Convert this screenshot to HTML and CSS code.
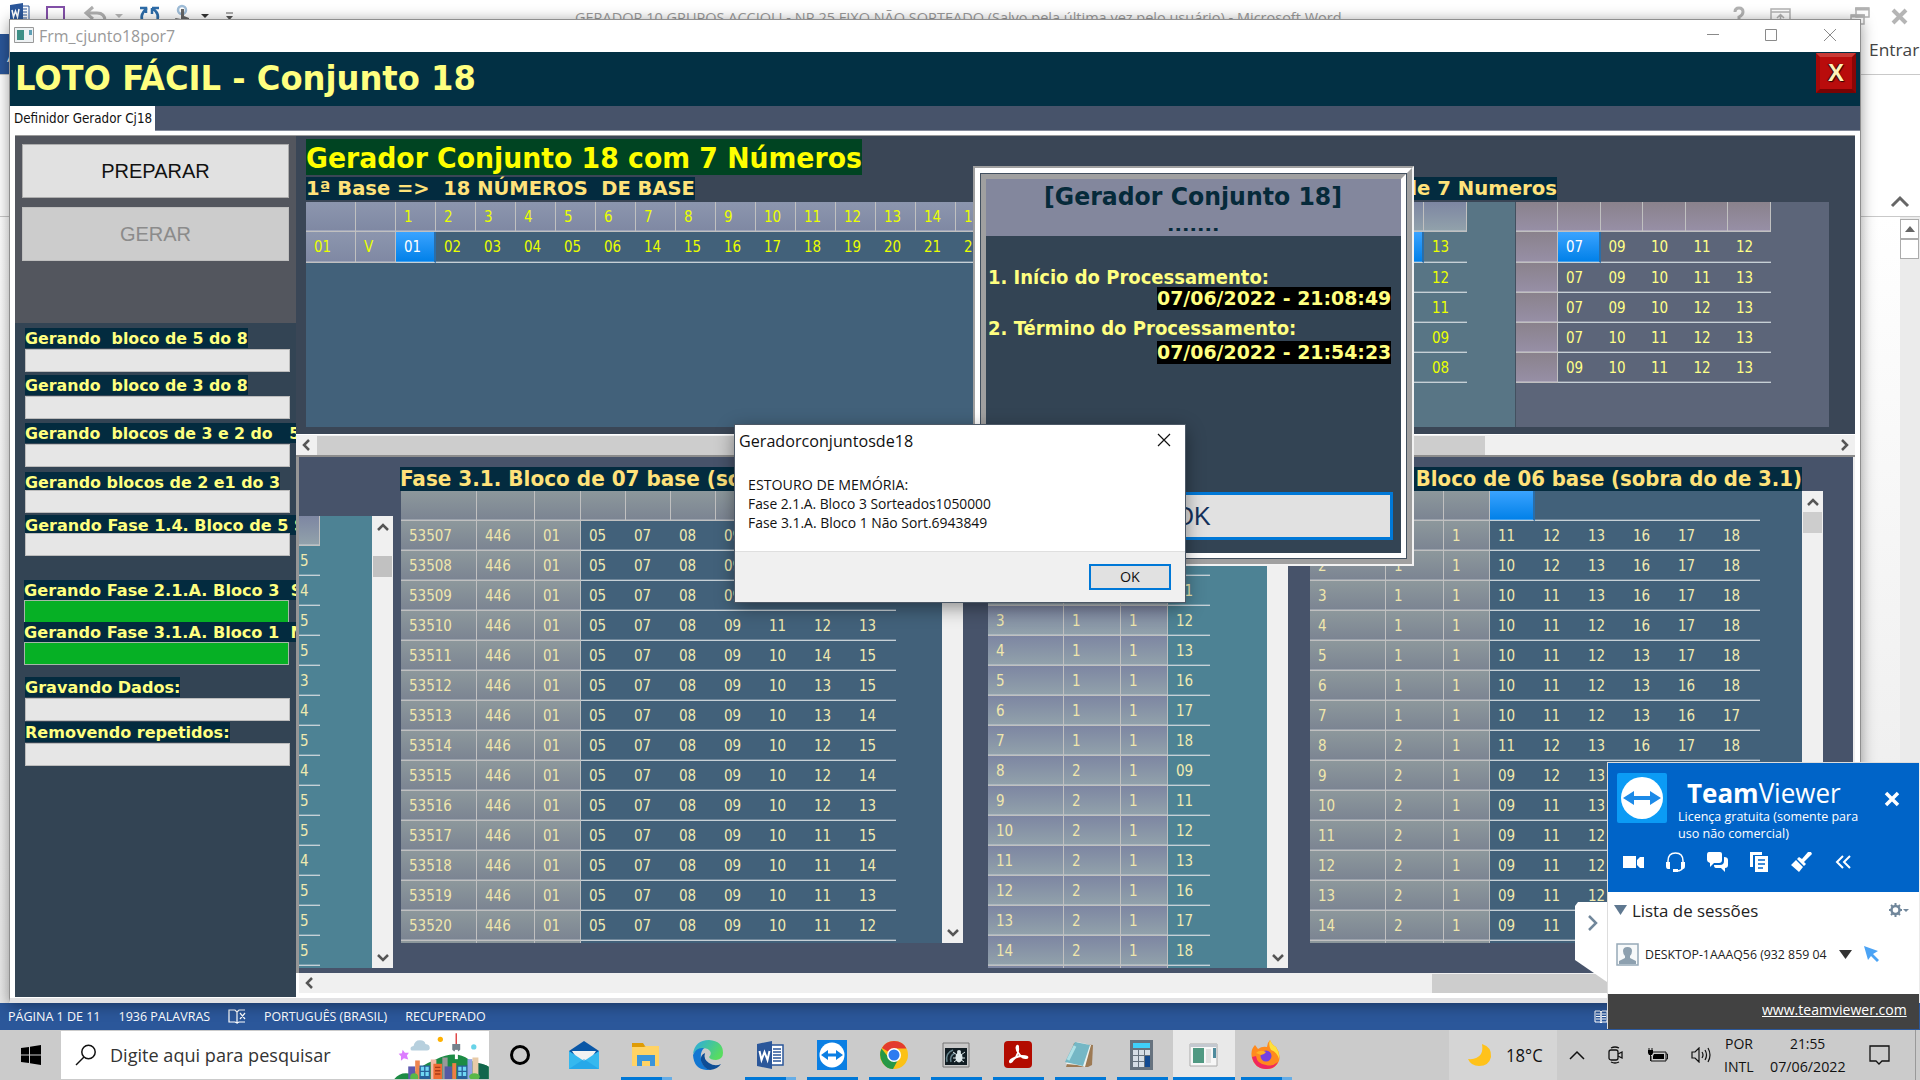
FILE: index.html
```html
<!DOCTYPE html>
<html lang="pt-BR">
<head>
<meta charset="utf-8">
<title>LOTO FÁCIL - Conjunto 18</title>
<link rel="stylesheet" href="styles.css">
</head>
<body>
<div class="desktop">

<section class="word">
  <header class="word-title">
    <svg class="word-tools" width="240" height="26" viewBox="0 0 240 26">
      <path d="M17 6h12v18H17z" fill="#fff" stroke="#2b579a"/><path d="M19 9h8M19 12h8M19 15h8M19 18h8" stroke="#2b579a"/>
      <path d="M10 5l13-2v22l-13-2z" fill="#2b579a"/><path d="M12 10l1.5 7 2-6 2 6L19 9" fill="none" stroke="#fff" stroke-width="1.5"/>
      <path d="M47 7h17v18H47z" fill="#fff" stroke="#8350a8" stroke-width="2"/><path d="M51 20h9v5h-9z" fill="#8350a8"/>
      <path d="M93 7l-7 6 7 6M87 13h10q8 0 8 8" fill="none" stroke="#b0b0b0" stroke-width="3"/>
      <path d="M115 14h8l-4 4z" fill="#b8b8b8"/>
      <path d="M147 8q-9 8-3 16M152 8h7M152 8v6M153 9q8 5 3 14M140 8h6v5" fill="none" stroke="#2d6ca8" stroke-width="2.500"/>
      <circle cx="182" cy="10" r="4" fill="none" stroke="#9fbdd8" stroke-width="2.5"/><path d="M181 9h3v7l5 2v6h-11l-3-6 6 1z" fill="#666"/>
      <path d="M201 14h8l-4 4z" fill="#333"/><path d="M226 13h7" stroke="#555"/><path d="M226 16h7l-3.500 4z" fill="#555"/>
    </svg>
    <span class="word-name"><span class="fit" data-w="767">GERADOR 10 GRUPOS ACCIOLI - NR 25 FIXO NÃO SORTEADO (Salvo pela última vez pelo usuário) - Microsoft Word</span></span>
    <svg class="word-sys" width="190" height="32" viewBox="0 0 190 32">
      <path d="M4 12q0-4 4-4t4 4q0 3-4 5v3" fill="none" stroke="#b3b3b3" stroke-width="3"/>
      <path d="M40 9h19v16H40zM40 12h19M49.500 25V15M46 18l3.500-3.500L53 18" fill="none" stroke="#b3b3b3" stroke-width="1.500"/>
      <path d="M125 8h13v9h-13zM120 15h13v9h-13z" fill="#fff" stroke="#b3b3b3" stroke-width="1.500"/><path d="M124 9h14M120 16h14" stroke="#b3b3b3" stroke-width="3"/>
      <path d="M162 10l13 13M175 10l-13 13" stroke="#b5b5b5" stroke-width="4"/>
    </svg>
  </header>
  <div class="word-tabs"><div class="word-file">A</div><div class="word-login"><span class="fit" data-w="50">Entrar</span></div></div>
  <div class="word-ribbon"><svg width="20" height="14" viewBox="0 0 20 14"><path d="M2 12l8-8 8 8" fill="none" stroke="#666" stroke-width="3"/></svg></div>
  <div class="word-page"><div class="word-scroll"><div class="word-up"><svg width="10" height="6"><path d="M0 6l5-6 5 6z" fill="#666"/></svg></div><div class="word-thumb"></div></div></div>
  <footer class="word-status">
    <span class="fit" data-w="93">PÁGINA 1 DE 11</span><span class="fit" data-w="92">1936 PALAVRAS</span>
    <svg width="18" height="16" viewBox="0 0 18 16"><path d="M1 1h6l2 2v11l-2-1H1zM9 3l2-2h6M9 14l2-1h6M12 4l5 6M17 4l-5 6" fill="none" stroke="#fff" stroke-width="1.200"/></svg>
    <span class="fit" data-w="123">PORTUGUÊS (BRASIL)</span><span class="fit" data-w="81">RECUPERADO</span>
    <svg class="book" width="14" height="14" viewBox="0 0 14 14"><path d="M1 1h5l1 1v11l-1-1H1zM13 1H8L7 2v11l1-1h5zM2 4h4M2 6.500h4M2 9h4M8 4h4M8 6.500h4M8 9h4" fill="none" stroke="#fff"/></svg>
  </footer>
</section>

<main class="form">
  <header class="form-bar">
    <svg width="20" height="16" viewBox="0 0 20 16"><path d="M.5.500h19v15H.5z" fill="#eef2f4" stroke="#999"/><path d="M3 3h7v10H3z" fill="#3d8f86"/><path d="M15 3h3v5h-3z" fill="#5d9fb5"/></svg>
    <span class="fit" data-w="136">Frm_cjunto18por7</span>
    <svg class="form-sys" width="132" height="16" viewBox="0 0 132 16"><path d="M1 7.500h12M59.500 2.500h11v11h-11zM118 2l12 12M130 2l-12 12" fill="none" stroke="#8a8a8a"/></svg>
  </header>
  <div class="form-head"><h1><span class="fit" data-w="461">LOTO FÁCIL - Conjunto 18</span></h1><button class="red-x"><span>X</span></button></div>
  <div class="tabs"><div class="tab"><span class="fit" data-w="138">Definidor Gerador Cj18</span></div></div>
  <div class="page">
    <aside class="side">
      <div class="side-buttons"><button class="big">PREPARAR</button><button class="big off">GERAR</button></div>
      <div class="meters">
        <div class="meter"><label><span class="fit" data-w="223">Gerando  bloco de 5 do 8</span></label><i></i></div>
        <div class="meter"><label><span class="fit" data-w="223">Gerando  bloco de 3 do 8</span></label><i></i></div>
        <div class="meter"><label><span class="fit" data-w="275">Gerando  blocos de 3 e 2 do   5</span></label><i></i></div>
        <div class="meter tight"><label><span class="fit" data-w="255">Gerando blocos de 2 e1 do 3</span></label><i></i></div>
        <div class="meter tight"><label><span class="fit" data-w="280">Gerando Fase 1.4. Bloco de 5 S</span></label><i></i></div>
        <div class="meter full"><label><span class="fit" data-w="278">Gerando Fase 2.1.A. Bloco 3  S</span></label><i></i></div>
        <div class="meter full"><label><span class="fit" data-w="280">Gerando Fase 3.1.A. Bloco 1  N</span></label><i></i></div>
        <div class="meter"><label><span class="fit" data-w="155">Gravando Dados:</span></label><i></i></div>
        <div class="meter"><label><span class="fit" data-w="205">Removendo repetidos:</span></label><i></i></div>
      </div>
    </aside>
    <div class="work">
      <section class="upper">
        <h2><span class="fit" data-w="556">Gerador Conjunto 18 com 7 Números</span></h2>
        <div class="captions"><span class="fit cap" data-w="389">1ª Base =&gt;  18 NÚMEROS  DE BASE</span><span class="fit cap" data-w="154">de 7 Numeros</span></div>
        <div class="upper-grids">
          <div class="pane pane-a"><div class="grid" id="base"></div></div>
          <div class="pane pane-b"><div class="grid" id="left7"></div></div>
          <div class="pane pane-c"><div class="grid" id="right7"></div></div>
        </div>
      </section>
      <div class="hbar one"><svg width="9" height="12" viewBox="0 0 9 12"><path d="M7 1L2 6l5 5" /></svg><div class="thumb"></div><svg width="9" height="12" viewBox="0 0 9 12"><path d="M2 1l5 5-5 5"/></svg></div>
      <section class="lower">
        <div class="box box-d"><div class="pane teal"><div class="grid" id="tail"></div></div><div class="vbar"><svg width="12" height="9" viewBox="0 0 12 9"><path d="M1 7l5-5 5 5"/></svg><div class="thumb"></div><svg width="12" height="9" viewBox="0 0 12 9"><path d="M1 2l5 5 5-5"/></svg></div></div>
        <div class="col-e"><span class="fit cap tall" data-w="356">Fase 3.1. Bloco de 07 base (sob</span>
          <div class="box box-e"><div class="pane"><div class="grid" id="base7"></div></div><div class="vbar"><svg width="12" height="9" viewBox="0 0 12 9"><path d="M1 7l5-5 5 5"/></svg><svg width="12" height="9" viewBox="0 0 12 9"><path d="M1 2l5 5 5-5"/></svg></div></div></div>
        <div class="box box-f"><div class="pane teal"><div class="grid" id="single"></div></div><div class="vbar"><svg width="12" height="9" viewBox="0 0 12 9"><path d="M1 7l5-5 5 5"/></svg><svg width="12" height="9" viewBox="0 0 12 9"><path d="M1 2l5 5 5-5"/></svg></div></div>
        <div class="col-g"><span class="fit cap tall" data-w="393"> Bloco de 06 base (sobra do de 3.1)</span>
          <div class="box box-g"><div class="pane"><div class="grid" id="base6"></div></div><div class="vbar"><svg width="12" height="9" viewBox="0 0 12 9"><path d="M1 7l5-5 5 5"/></svg><div class="thumb"></div><svg width="12" height="9" viewBox="0 0 12 9"><path d="M1 2l5 5 5-5"/></svg></div></div></div>
      </section>
      <div class="hbar two"><svg width="9" height="12" viewBox="0 0 9 12"><path d="M7 1L2 6l5 5"/></svg><div class="thumb"></div></div>
    </div>
  </div>
</main>

<section class="result"><div class="r2"><div class="r3"><div class="r4">
  <header><h3><span class="fit" data-w="298">[Gerador Conjunto 18]</span></h3><p><span class="fit" data-w="52">.......</span></p></header>
  <div class="r-line first"><span class="fit" data-w="281">1. Início do Processamento:</span></div>
  <div class="r-date"><span class="fit" data-w="234">07/06/2022 - 21:08:49</span></div>
  <div class="r-line"><span class="fit" data-w="308">2. Término do Processamento:</span></div>
  <div class="r-date late"><span class="fit" data-w="234">07/06/2022 - 21:54:23</span></div>
  <button class="r-ok">OK</button>
</div></div></div></section>

<section class="msg">
  <header><span class="fit" data-w="174">Geradorconjuntosde18</span><svg width="14" height="14" viewBox="0 0 14 14"><path d="M1 1l12 12M13 1L1 13" stroke="#111" stroke-width="1.200"/></svg></header>
  <div class="msg-text"><span class="fit" data-w="160">ESTOURO DE MEMÓRIA:</span><span class="fit" data-w="243">Fase 2.1.A. Bloco 3 Sorteados1050000</span><span class="fit" data-w="239">Fase 3.1.A. Bloco 1 Não Sort.6943849</span></div>
  <footer><button><span class="fit" data-w="20">OK</span></button></footer>
</section>

<section class="tv">
  <div class="tv-handle"><svg width="32" height="80" viewBox="0 0 32 80"><path d="M3 0h29v80L0 58V4z" fill="#fff"/><path d="M14 14l7 7-7 7" fill="none" stroke="#71879b" stroke-width="2.500"/></svg></div>
  <header>
    <div class="tv-top">
      <svg width="50" height="50" viewBox="0 0 50 50"><rect width="50" height="50" rx="2" fill="#0b9bf5"/><circle cx="25" cy="25" r="21" fill="#fff"/><path d="M6 25l11-7v5h16v-5l11 7-11 7v-5H17v5z" fill="#1c8ae8"/></svg>
      <div class="tv-names"><b><span class="fit" data-w="154"><strong>Team</strong>Viewer</span></b><span class="fit" data-w="180">Licença gratuita (somente para</span><span class="fit" data-w="111">uso não comercial)</span></div>
      <svg class="tv-x" width="16" height="16" viewBox="0 0 16 16"><path d="M2 2l12 12M14 2L2 14" stroke="#fff" stroke-width="3.500"/></svg>
    </div>
    <div class="tv-icons">
      <svg viewBox="0 0 21 20"><path d="M0 4h13v12H0zM14 8l3-3h4v11h-4l-3-3z"/></svg>
      <svg viewBox="0 0 21 20"><path d="M3 12V9q0-8 7.500-8T18 9v3M18 14q0 5-7 5" fill="none" stroke="#fff" stroke-width="1.500"/><path d="M1 10h4v7H3q-2 0-2-3zM16 10h4v4q0 3-2 3h-2zM8 17h5v3H8z"/></svg>
      <svg viewBox="0 0 21 20"><path d="M2 0h11q2 0 2 2v6q0 3-3 3H7l-4 4v-4Q0 10 0 8V3q0-3 2-3z"/><path d="M17 5q4 0 4 3v5q0 3-3 3v4l-4-4H9q-2 0-2-3h6q4 0 4-4z"/></svg>
      <svg viewBox="0 0 21 20"><path d="M1 0h12v3H4v12H1zM6 4h13v16H6z"/><path d="M9 8h7M9 12h7M9 16h5" stroke="#0064c8" stroke-width="1.500"/></svg>
      <svg viewBox="0 0 21 20"><path d="M20 0l1 2-8 8 2 2-2 2-7-7 2-2 3 2 6-7zM5 8l7 7-4 5-8-7z"/></svg>
      <svg viewBox="0 0 21 20"><path d="M10 4l-6 6 6 6M17 4l-6 6 6 6" fill="none" stroke="#fff" stroke-width="2"/></svg>
    </div>
  </header>
  <div class="tv-body">
    <div class="tv-list"><svg width="13" height="10"><path d="M0 0h13L6.500 10z" fill="#5f7890"/></svg><span class="fit" data-w="126">Lista de sessões</span><svg class="gear" width="20" height="14" viewBox="0 0 20 14"><circle cx="6.500" cy="7" r="4" fill="none" stroke="#71879b" stroke-width="2.500"/><path d="M6.500 0v3M6.500 11v3M0 7h3M10 7h3M2 2l2 2M9 10l2 2M11 2L9 4M4 10l-2 2" stroke="#71879b" stroke-width="2"/><path d="M14 6h6l-3 3z" fill="#71879b"/></svg></div>
    <div class="tv-row"><svg width="23" height="23" viewBox="0 0 23 23"><path d="M1 1h21v21H1z" fill="#f7f9fa" stroke="#97a9b8" stroke-width="1.500"/><path d="M3 21v-3l6-3v-2q-2-2-2-5 0-4 4.500-4T16 8q0 3-2 5v2l6 3v3z" fill="#8da0af"/></svg><span class="fit" data-w="182">DESKTOP-1AAAQ56 (932 859 04</span><svg width="13" height="9"><path d="M0 0h13L6.500 9z" fill="#333"/></svg><svg width="16" height="16" viewBox="0 0 16 16"><path d="M0 0l14 5-5 3 6 6-2 2-6-6-3 4z" fill="#4ba3f5"/></svg></div>
  </div>
  <footer><span class="fit" data-w="145">www.teamviewer.com</span></footer>
</section>

<nav class="taskbar">
  <div class="start"><svg width="20" height="20" viewBox="0 0 20 20"><path d="M0 3l8-1v7.500H0zM9 1.800L20 0v9.500H9zM0 10.500h8V18l-8-1zM9 10.500h11V20L9 18.200z"/></svg></div>
  <div class="search">
    <svg width="22" height="22" viewBox="0 0 22 22"><circle cx="13.500" cy="8" r="6.700" fill="none" stroke="#111" stroke-width="1.500"/><path d="M9 13l-8 8" stroke="#111" stroke-width="1.500"/></svg>
    <span class="fit" data-w="221">Digite aqui para pesquisar</span>
    <svg class="city" width="95" height="48" viewBox="45 35 285 145">
      <path d="M95 93q-4-12 8-13 4-18 20-17 14 0 16 11 14 1 13 14-1 6-8 6H100z" fill="#b7d0de"/><circle cx="184" cy="60" r="8" fill="#ffb100"/><circle cx="285" cy="83" r="8" fill="#68d3e8"/>
      <path d="M70 92l7 9 12 0-6 8 4 12-13-4-9 8 0-14-7-7 10-2z" fill="#dc7cff"/>
      <path d="M45 180q20-25 55-14 20-25 70-45 60-30 100 0l30 14q20 0 30 8v37z" fill="#1c8b45"/><path d="M260 140q30-20 70 3v37h-60z" fill="#12664d"/>
      <path d="M230 42h4v35h-4z" fill="#d33"/><path d="M220 74h24v18l-5 4h-14l-5-4z" fill="#76818c"/><path d="M228 92h9v28h-9z" fill="#fff"/>
      <path d="M190 115h16v65h-16z" fill="#999"/><path d="M87 142h21v38H87z" fill="#5e5ab0"/><path d="M108 124h14v56h-14z" fill="#ee8650"/><path d="M155 121h17v59h-17z" fill="#f2b8a4"/><path d="M121 139h32v41h-32zM234 139h32v41h-32z" fill="#28609a"/><path d="M125 143h10v12h-10zM139 143h10v12h-10zM125 159h10v12h-10zM139 159h10v12h-10zM238 143h10v12h-10zM252 143h10v12h-10zM238 159h10v12h-10zM252 159h10v12h-10z" fill="#70d7f4"/><path d="M163 134h26v46h-26z" fill="#ed6c32"/><path d="M197 142h23v38h-23z" fill="#555aa3"/><path d="M220 132h12v48h-12z" fill="#ef7e45"/><path d="M266 120h15v60h-15z" fill="#91a3e5"/><path d="M281 115h18v65h-18z" fill="#e8cba8"/><path d="M168 145h16M168 155h16M168 165h16" stroke="#a83a16" stroke-width="4"/><circle cx="105" cy="175" r="12" fill="#59b848"/><ellipse cx="287" cy="173" rx="16" ry="10" fill="#59b848"/>
    </svg>
  </div>
  <div class="apps">
    <div class="app"><svg viewBox="0 0 30 30"><circle cx="13" cy="15" r="8.500" fill="none" stroke="#000" stroke-width="3"/></svg></div>
    <div class="app"><svg viewBox="0 0 30 30"><path d="M0 11L15 1l15 10v8H0z" fill="#0a57a6"/><path d="M3 11h24l-8 12h-8z" fill="#f2f2f2"/><path d="M0 11l15 10 15-10v18H0z" fill="#35b8ef"/><path d="M0 29l15-10 15 10z" fill="#1d9ce4" opacity=".6"/></svg></div>
    <div class="app run multi"><svg viewBox="0 0 30 30"><path d="M1 3h11l2 3h14v5H1z" fill="#df9b05"/><path d="M1 7h12l2-1h13v20H1z" fill="#ffd365"/><path d="M6 15h18v11h-5v-5h-8v5H6z" fill="#3a95db"/></svg></div>
    <div class="app"><svg viewBox="0 0 30 30"><defs><linearGradient id="eg" x1="0" y1="0" x2="1" y2=".5"><stop offset="0" stop-color="#2aa8e8"/><stop offset="1" stop-color="#58dc60"/></linearGradient></defs><path d="M0 14Q2 0 16 0q14 1 14 13 0 6-7 7-6 0-7-3 3-3 1-6-3-4-8-2-6 1-9 5z" fill="url(#eg)"/><path d="M0 15q3-8 11-7-4 4-3 11 1 8 9 11Q1 31 0 15z" fill="#1277d2"/><path d="M12 13q-5 2-4 8 3 8 9 9 8-1 11-6-6 3-12-1-6-4-4-10z" fill="#0d4d96"/></svg></div>
    <div class="app run multi"><svg viewBox="0 0 30 30"><path d="M15 5h13v20H15z" fill="#fff" stroke="#2b579a" stroke-width="1.500"/><path d="M18 9h8M18 12h8M18 15h8M18 18h8M18 21h8" stroke="#2b579a" stroke-width="1.300"/><path d="M2 4l15-3v28L2 26z" fill="#2b579a"/><path d="M4.500 11l2 9 3-8 3 8 2-9" fill="none" stroke="#fff" stroke-width="2"/></svg></div>
    <div class="app run"><svg viewBox="0 0 30 30"><path d="M0 0h30v30H0z" fill="#0b7fe3"/><circle cx="15" cy="15" r="12.500" fill="#fff"/><path d="M4 15l7-5v3.500h8V10l7 5-7 5v-3.500h-8V20z" fill="#0b7fe3"/></svg></div>
    <div class="app run"><svg viewBox="0 0 30 30"><circle cx="15" cy="15" r="14" fill="#fbc116"/><path d="M15 15L3 8Q7 1 15 1q9 0 12.500 7.500H15z" fill="#e33b2e"/><path d="M2.500 8.500Q-1 16 4 23.500 8 29 14 29l6-11-10 0z" fill="#279847"/><circle cx="15" cy="15" r="7" fill="#fff"/><circle cx="15" cy="15" r="5.500" fill="#2e7cf0"/></svg></div>
    <div class="app run"><svg viewBox="0 0 30 30"><path d="M2 3h26v24H2z" fill="#c9c9c9" stroke="#777"/><path d="M4 8h22v17H4z" fill="#111d23"/><path d="M6 22q-2-9 6-12M10 22q-2-6 4-9" stroke="#64818a" fill="none" stroke-width="1.500"/><ellipse cx="18" cy="17.500" rx="3.500" ry="5" fill="#dce7e9"/><circle cx="18" cy="12" r="2" fill="#dce7e9"/><path d="M12 12l4 3M24 12l-4 3M12 18h12M13 22l4-3M23 22l-4-3" stroke="#dce7e9"/></svg></div>
    <div class="app run"><svg viewBox="0 0 30 30"><rect x="1" y="1" width="28" height="27" rx="4" fill="#b30b00"/><path d="M7 22q-1-2 6-5 3-5 2-10 0-2-1-1-2 3 3 9 3 4 7 3 2-2-5-2-6 0-9 4-2 3-3 2z" fill="none" stroke="#fff" stroke-width="1.800"/></svg></div>
    <div class="app run"><svg viewBox="0 0 30 30"><path d="M9 3l19 2-1 20-4 2H1z" fill="#9d7a54"/><path d="M12 2l14 3-6 22-8-2-11-1z" fill="#eef2ee"/><path d="M10 2l15 3-7 21L0 22z" fill="#75b7c5"/><path d="M10 6L3 20" stroke="#afe1e6" stroke-width="3"/></svg></div>
    <div class="app run"><svg viewBox="0 0 30 30"><path d="M3 0h23v30H3z" fill="#66727e"/><path d="M6 3h17v5H6z" fill="#3fd0fa"/><path d="M6 10h5v5H6zM12 10h5v5h-5zM18 10h5v5h-5zM6 16h5v5H6zM12 16h5v5h-5zM6 22h5v5H6zM12 22h5v5h-5z" fill="#d6dee6"/><path d="M18 16h5v11h-5z" fill="#124a91"/></svg></div>
    <div class="app run active"><svg viewBox="0 0 30 30"><path d="M1 4h27v22H1z" fill="#f7f7f7" stroke="#aaa"/><path d="M1 4h27v3H1z" fill="#c3c8cf"/><path d="M4 8h11v15H4z" fill="#509982"/><path d="M17 9h5v14h-5z" fill="#e1e1e1"/><path d="M24 8h3v10h-3z" fill="#4f8b9d"/></svg></div>
    <div class="app run multi"><svg viewBox="0 0 30 30"><path d="M19 0q2 5 6 7 5 7 3 14-4 9-13 8Q3 28 1 18-1 10 4 5l3 4q4-3 9-2 0-4 3-7z" fill="#ff8a1d"/><path d="M19 0q2 5 6 7 4 6 3 12-2-7-8-9-3-5-1-10z" fill="#ffe03a"/><path d="M1 17q3 12 14 12 9 0 12-7-6 5-12 3-9-1-10-9z" fill="#f0275f"/><circle cx="15" cy="16" r="5.500" fill="#7542e0"/><path d="M5 13q4-4 10-1-2 3-5 3z" fill="#ffb223"/></svg></div>
  </div>
  <div class="weather"><svg width="24" height="24" viewBox="0 0 24 24"><path d="M14 1q10 3 9 13-2 9-12 9-8 0-11-7 9 1 13-5 2-4 1-10z" fill="#ffc21a"/></svg><span class="fit" data-w="37">18°C</span></div>
  <div class="tray">
    <svg width="16" height="10" viewBox="0 0 16 10"><path d="M1 9l7-7 7 7" fill="none" stroke="#111" stroke-width="1.500"/></svg>
    <svg width="16" height="18" viewBox="0 0 16 18"><rect x="1" y="4" width="9" height="10" rx="2" fill="none" stroke="#111" stroke-width="1.300"/><path d="M10 8l4-2v6l-4-2M3 2q4-2 8 0M3 16q4 2 8 0" fill="none" stroke="#111" stroke-width="1.300"/></svg>
    <svg width="21" height="14" viewBox="0 0 21 14"><path d="M6 4h13v9H4V8M19 6h1.500v5H19" fill="none" stroke="#111"/><path d="M7 6h10v5H6V8z" /><path d="M1 2h5v3l-1 2H2L1 5z"/><path d="M2 0v2M5 0v2M3.500 7v6" stroke="#111"/></svg>
    <svg width="21" height="16" viewBox="0 0 21 16"><path d="M1 5h3l4-4v14l-4-4H1zM11 5q2 3 0 6M14 3q3 5 0 10M17 1q4 7 0 14" fill="none" stroke="#111" stroke-width="1.200"/></svg>
  </div>
  <div class="lang"><span class="fit" data-w="28">POR</span><span class="fit" data-w="30">INTL</span></div>
  <div class="clock"><span class="fit" data-w="35">21:55</span><span class="fit" data-w="76">07/06/2022</span></div>
  <div class="notice"><svg width="21" height="21" viewBox="0 0 21 21"><path d="M1 1h19v15h-7l-3 3-3-3H1z" fill="none" stroke="#111" stroke-width="1.300"/></svg></div>
</nav>
</div>
<script src="grids.js"></script>
</body>
</html>
```
FILE: styles.css
```css
* { box-sizing: border-box; margin: 0; padding: 0; }
body { font-family: "Open Sans", "Noto Sans", sans-serif; overflow: hidden; }
button { font: inherit; border: 0; }
svg { display: block; flex: none; }
.fit { display: inline-block; white-space: pre; transform-origin: 0 50%; flex: none; }
.desktop { position: relative; width: 1920px; height: 1080px; overflow: hidden; background: #fff; }

/* Word in the background */
.word { display: flex; flex-direction: column; height: 1030px; }
.word-title { height: 32px; display: flex; align-items: flex-start; background: #fff; }
.word-name { margin-left: 335px; height: 32px; font-size: 15px; line-height: 34px; color: #999; }
.word-sys { margin-left: 389px; }
.word-tabs { height: 43px; border-bottom: 1px solid #c9c9c9; display: flex; justify-content: space-between; align-items: flex-end; }
.word-file { width: 12px; height: 40px; background: #2b579a; color: #fff; font-size: 15px; line-height: 44px; padding-left: 7px; overflow: hidden; }
.word-login { font-size: 17px; line-height: 35px; height: 42px; width: 51px; color: #444; overflow: hidden; }
.word-ribbon { height: 142px; border-bottom: 1px solid #c9c9c9; display: flex; justify-content: flex-end; align-items: flex-end; padding: 0 10px 8px 0; }
.word-page { flex: 1; background: linear-gradient(#fff, #e9e9e9); display: flex; justify-content: flex-end; }
.word-scroll { width: 20px; background: #ebebeb; padding-top: 2px; }
.word-up, .word-thumb { width: 19px; height: 20px; border: 1px solid #ababab; background: #fff; display: flex; align-items: center; justify-content: center; }
.word-status { height: 27px; background: #2b579a; display: flex; align-items: center; padding-left: 8px; color: #fff; font-size: 12.5px; gap: 18px; }
.word-status .book { margin-left: 1090px; }

/* generator form */
.form { position: absolute; left: 9px; top: 19px; width: 1852px; height: 984px; background: #fff; display: flex; flex-direction: column; border: 1px solid #8f8f8f; border-bottom: 5px solid #e2e2e4; box-shadow: 0 2px 14px rgba(0,0,0,.4); font-family: "DejaVu Sans Condensed", "DejaVu Sans", sans-serif; font-stretch: condensed; }
.form-bar { height: 32px; flex: none; display: flex; align-items: center; padding: 0 22px 2px 4px; gap: 5px; font-family: "Open Sans", sans-serif; font-stretch: normal; font-size: 17px; color: #999; }
.form-sys { margin-left: auto; }
.form-head { height: 54px; flex: none; background: #023044; display: flex; justify-content: space-between; padding: 1px 4px 0 5px; }
.form-head h1 { font-size: 34px; line-height: 51px; color: #ffff80; }
.red-x { width: 40px; height: 40px; background: #b90c0c; border: 4px solid; border-color: #c93a36 #8a0606 #780303 #a50808; color: #fff0b8; font: bold 24px/30px "Liberation Sans", sans-serif; text-shadow: 1px 1px 1px #300, -1px 0 1px #300; }
.tabs { height: 25px; flex: none; background: #47536a; border-bottom: 1px solid #848b9b; }
.tab { height: 25px; width: 145px; background: #fff; padding-left: 4px; font-size: 13.500px; line-height: 24px; color: #111; }
.page { flex: 1; min-height: 0; display: flex; margin: 4px 5px 1px 5px; border-top: 1px solid #9a9a9a; }

.side { width: 281px; background: #334454; overflow: hidden; }
.side-buttons { height: 187px; background: #53565e; padding: 8px 7px; display: flex; flex-direction: column; gap: 9px; }
.big { height: 54px; background: #e1e1e1; border: 1px solid #adadad; font: 20px "Liberation Sans", sans-serif; color: #111; }
.big.off { background: #cccccc; border-color: #bfbfbf; color: #8b8b8b; }
.meters { display: grid; padding: 5px 0 0 10px; grid-template-rows: 47px 48px 49px 43px 65px 42px 55px 45px 45px; font-weight: bold; font-size: 16px; color: #ffff80; }
.meter label { display: block; height: 21px; line-height: 22px; white-space: nowrap; }
.meter label .fit { background: #032b3f; height: 20px; }
.meter.tight label { height: 18px; }
.meter.full { margin-left: -1px; }
.meter.full label { height: 20px; line-height: 21px; }
.meter i { display: block; position: relative; width: 265px; height: 23px; background: #e6e6e6; border: 1px solid #bcbcbc; }
.meter.full i { background: #06b025; border-color: #a5b8a8; }

.work { flex: 1; min-width: 0; display: flex; flex-direction: column; }
.upper { height: 298px; flex: none; background: #3a4656; padding: 3px 0 0 10px; }
.upper h2 { font-size: 28.500px; line-height: 40px; height: 38px; color: #ff0; }
.upper h2 .fit { background: #004422; height: 36px; }
.cap { background: #032b3f; color: #ffe27a; font-weight: bold; font-size: 19px; line-height: 23px; height: 23px; }
.cap.tall { display: block; width: max-content; font-size: 20.500px; height: 24px; line-height: 24px; }
.captions { height: 25px; width: 1251px; display: flex; justify-content: space-between; }
.upper-grids { display: flex; height: 225px; }
.pane { background: #42617a; overflow: hidden; flex: 1; }
.pane.teal { background: #4d8294; }
.upper .pane { flex: none; }
.upper .pane-a { width: 800px; }
.upper .pane-b { width: 280px; margin-left: 130px; background: #587585; border-right: 1px solid #43505f; }
.upper .pane-c { width: 313px; background: #5c6579; }

.grid { display: grid; justify-content: start; grid-auto-rows: 30px; font-size: 15px; line-height: 30px; }
.grid span { border-bottom: 1px solid #c6d0d6; box-shadow: inset 0 -1px rgba(255,255,255,.25); padding-left: 8px; white-space: nowrap; overflow: hidden; color: #f0eab0; }
.grid .k { border-right: 1px solid #c0c0c0; border-bottom-color: #c0c0c0; background: linear-gradient(#8d989c, #7b8492); color: #efe6ac; }
.grid .sel { background: linear-gradient(#3aa3ff, #0080e8); color: #fff; border-right: 2px solid #2b6ea8; }
.teal .grid .k, #left7 .k { background: linear-gradient(#7d86a2, #92a2ab); }
#base { grid-template-columns: 50px 40px repeat(17, 40px); }
#base span { color: #eaff00; }
#base .k { background: linear-gradient(#8c96ae, #7f88a3); }
#base .sel, #right7 .sel { color: #fff; }
#base, #left7, #right7 { grid-template-rows: 30px 31px; line-height: 31px; }
#left7 { grid-template-columns: repeat(4, 43px); margin-left: 59px; }
#left7 span { color: #eaff00; }
#right7 { grid-template-columns: 42px repeat(5, 42.500px); }
#right7 span { color: #ffff88; }
#right7 .k { background: linear-gradient(#8a828c, #978fa6); }
#tail { grid-template-columns: 21px; }
#tail span { padding-left: 1px; }
#base7 { grid-template-columns: 76px 58px 46px repeat(7, 45px); }
#base6 { grid-template-columns: 76px 58px 46px repeat(6, 45px); }
#single { grid-template-columns: 76px 57px 47px 42px; }

.hbar { flex: none; display: flex; align-items: center; background: #f0f0f0; }
.hbar path, .vbar path { fill: none; stroke: #555; stroke-width: 2.500; }
.hbar.one { height: 23px; border-top: 1px solid #fff; border-bottom: 2px solid #8c8c8c; padding: 0 6px; }
.hbar.one .thumb { height: 19px; width: 1168px; margin: 0 auto 0 6px; background: #cdcdcd; }
.hbar.two { height: 20px; margin-left: 3px; padding-left: 6px; }
.hbar.two .thumb { height: 19px; width: 240px; margin-left: 1118px; background: #cdcdcd; }
.lower { height: 516px; flex: none; background: #47536a; border-left: 3px solid #969696; border-right: 2px solid #eee; display: flex; align-items: flex-start; }
.box { display: flex; }
.vbar { width: 21px; background: #f0f0f0; display: flex; flex-direction: column; align-items: center; padding: 7px 0 6px; justify-content: space-between; }
.vbar .thumb { width: 19px; height: 21px; background: #cdcdcd; margin-bottom: auto; }
.box-d { width: 94px; height: 452px; margin-top: 59px; }
.box-d .thumb { margin-top: 24px; background: #c1c1c1; }
.col-e { width: 563px; margin: 10px 0 0 7px; }
.box-e { height: 452px; margin-left: 1px; }
.box-f { width: 300px; height: 452px; margin: 59px 0 0 25px; }
.col-g { width: 514px; margin: 10px 0 0 22px; }
.col-g .cap { margin-left: 99px; }
.box-g { height: 452px; width: 513px; }
.box-g .thumb { margin-top: 5px; }

/* result window with double bevel */
.result { position: absolute; left: 973px; top: 166px; width: 441px; height: 400px; border: 2px solid; border-color: #a0a0a0 #f2f2f2 #f2f2f2 #a0a0a0; font-family: "DejaVu Sans Condensed", "DejaVu Sans", sans-serif; font-stretch: condensed; font-weight: bold; }
.r2 { height: 100%; border: 5px solid; border-color: #fff #a0a0a0 #a0a0a0 #fff; }
.r3 { height: 100%; border: 1px solid #42505f; }
.r4 { height: 100%; border: 5px solid; border-color: #a0a0a0 #fff #fff #a0a0a0; background: #334454; display: flex; flex-direction: column; }
.r4 header { height: 57px; background: #83879d; color: #062a3a; text-align: center; }
.r4 h3 { font-size: 25px; line-height: 35px; height: 34px; }
.r4 p { font-size: 16px; line-height: 26px; height: 20px; }
.r-line { height: 23px; line-height: 22px; font-size: 19.500px; color: #ffff80; padding: 0 0 0 2px; }
.r-line.first { margin-top: 31px; height: 20px; }
.r-date { text-align: right; height: 31px; padding-right: 10px; font-size: 19.500px; line-height: 23px; color: #ffff80; }
.r-date .fit { background: #000; height: 23px; }
.r-ok { margin: auto 8px 13px 6px; height: 48px; border: 3px solid #0078d7; background: #e1e1e1; color: #14315c; font: 25px "Liberation Sans", sans-serif; }

/* message box */
.msg { position: absolute; left: 735px; top: 425px; width: 450px; height: 177px; background: #fff; box-shadow: 0 0 0 1px #4c5866, 0 5px 18px rgba(0,0,0,.45); display: flex; flex-direction: column; color: #111; }
.msg header { height: 32px; display: flex; align-items: center; justify-content: space-between; padding: 0 14px 2px 4px; font-size: 16.500px; }
.msg-text { flex: 1; display: flex; flex-direction: column; align-items: flex-start; padding: 18px 0 0 13px; font-size: 15px; line-height: 19px; }
.msg footer { height: 51px; background: #f0f0f0; border-top: 1px solid #dfdfdf; display: flex; justify-content: flex-end; padding: 12px 14px 0 0; }
.msg button { width: 82px; height: 26px; border: 2px solid #0078d7; background: #e1e1e1; font-size: 15px; line-height: 18px; padding-bottom: 2px; color: #111; }

/* TeamViewer panel */
.tv { position: absolute; left: 1607px; top: 762px; width: 312px; height: 267px; background: #fff; border-left: 1px solid #ddd; border-top: 1px solid #ddd; display: flex; flex-direction: column; color: #222; }
.tv-handle { position: absolute; left: -33px; top: 139px; }
.tv header { height: 129px; background: #0064c8; color: #fff; }
.tv-top { display: flex; padding: 10px 18px 0 9px; height: 86px; }
.tv-names { display: flex; flex-direction: column; align-items: flex-start; margin-left: 11px; font-size: 12.500px; line-height: 17px; width: 206px; }
.tv-names b { font-weight: normal; font-size: 27px; line-height: 39px; height: 35px; padding-left: 9px; }
.tv-x { margin-top: 18px; }
.tv-icons { display: flex; gap: 21px; padding: 3px 0 0 15px; }
.tv-icons svg { width: 21px; height: 20px; fill: #fff; }
.tv-body { flex: 1; padding: 0 6px; }
.tv-list { display: flex; align-items: center; height: 36px; gap: 5px; font-size: 17px; }
.tv-list .gear { margin-left: auto; margin-right: 4px; }
.tv-row { display: flex; align-items: center; height: 52px; padding-left: 2px; gap: 6px; font-size: 13px; }
.tv-row svg:nth-last-child(2) { margin: 0 6px; }
.tv footer { height: 35px; background: #424242; color: #fff; text-align: right; padding-right: 12px; font-size: 15px; line-height: 31px; }
.tv footer .fit { text-decoration: underline; }

/* taskbar */
.taskbar { height: 50px; background: #cbcbcb; display: flex; color: #111; }
.start { width: 61px; display: flex; align-items: center; justify-content: center; }
.search { width: 428px; height: 48px; margin: 1px 2px 0 0; background: #fff; display: flex; align-items: center; padding-left: 14px; gap: 13px; font-size: 18px; color: #333; }
.city { margin-left: auto; }
.apps { display: flex; }
.app { width: 62px; height: 50px; display: flex; justify-content: center; padding-top: 10px; }
.app svg { width: 30px; height: 30px; }
.app.run { background: linear-gradient(#0078d7, #0078d7) 6px 47px / 51px 3px no-repeat; }
.app.multi { background: linear-gradient(90deg, #0078d7 41px, #66ade6 41px) 6px 47px / 51px 3px no-repeat; }
.app.active { background: linear-gradient(#0078d7, #0078d7) 0 47px / 62px 3px no-repeat #e9e9e9; }
.weather { width: 108px; margin-left: 152px; background: #d5d5d5; display: flex; align-items: center; gap: 14px; padding-left: 19px; font-size: 18px; }
.tray { display: flex; align-items: center; width: 160px; padding-left: 12px; gap: 23px; }
.lang, .clock { display: flex; flex-direction: column; align-items: center; font-size: 15px; line-height: 23px; padding-top: 2px; }
.lang { width: 44px; }
.clock { width: 93px; }
.notice { margin-left: 15px; width: 47px; padding-top: 15px; border-right: 1px solid #999; }
```
FILE: grids.js
```js
// Each grid row is a list of cells; the first `keys` cells are fixed columns.
function fill(id, rows, keys, opts = {}) {
  const grid = document.getElementById(id);
  rows.forEach((row, r) => row.forEach((value, c) => {
    const cell = document.createElement('span');
    cell.textContent = value;
    if (c < keys || (r === 0 && !opts.openHead)) cell.className = 'k';
    if (opts.sel && opts.sel[0] === r && opts.sel[1] === c) cell.className = 'sel';
    grid.appendChild(cell);
  }));
}
const blank = n => Array(n).fill('');
const split = s => s.split(' ');

fill('base', [
  ['', '', ...Array.from({ length: 15 }, (_, i) => String(i + 1)), '', ''],
  [...split('01 V 01 02 03 04 05 06 14 15 16 17 18 19 20 21 22'), '', ''],
], 2, { sel: [1, 2] });

fill('left7', [blank(4), ...['13', '12', '11', '09', '08'].map(v => ['', '', '', v])], 0, { sel: [1, 2] });

fill('right7', [blank(6),
  ...['07 09 10 11 12', '07 09 10 11 13', '07 09 10 12 13', '07 10 11 12 13', '09 10 11 12 13'].map(s => ['', ...split(s)]),
], 1, { sel: [1, 1] });

fill('tail', [[''], ...split('5 4 5 5 3 4 5 4 5 5 4 5 5 5').map(v => [v])], 0);

// Rows 53507-53509 and the first rows of `single` lie partly behind the dialogs.
const sevens = ['09   ', '09   ', '09   ', '09 11 12 13', '09 10 14 15', '09 10 13 15', '09 10 13 14', '09 10 12 15',
  '09 10 12 14', '09 10 12 13', '09 10 11 15', '09 10 11 14', '09 10 11 13', '09 10 11 12'];
fill('base7', [blank(10),
  ...sevens.map((s, i) => [String(53507 + i), '446', '01', '05', '07', '08', ...split(s)]),
  blank(10)], 3);

const singles = ['', '11', '12', '13', '16', '17', '18', '09', '11', '12', '13', '16', '17', '18'];
fill('single', [blank(4), ...singles.map((v, i) => i < 2 ? ['', '', '', v] : [String(i + 1), i < 7 ? '1' : '2', '1', v]), blank(4)], 3);

const sixes = ['11 12 13 16 17 18', '10 12 13 16 17 18', '10 11 13 16 17 18', '10 11 12 16 17 18', '10 11 12 13 17 18',
  '10 11 12 13 16 18', '10 11 12 13 16 17', '11 12 13 16 17 18', '09 12 13   ', '09 11 13   ',
  '09 11 12   ', '09 11 12   ', '09 11 12   ', '09 11    '];
fill('base6', [blank(9), ...sixes.map((s, i) => [i ? String(i + 1) : '', i ? (i < 7 ? '1' : '2') : '', '1', ...split(s)]), blank(9)], 3,
  { sel: [0, 3], openHead: true });

// Labels have a fixed width, so their type is condensed or widened to fill it.
document.querySelectorAll('.fit').forEach(el => {
  const natural = el.offsetWidth;
  const wanted = Number(el.dataset.w);
  el.style.transform = `scaleX(${wanted / natural})`;
  el.style.marginRight = `${wanted - natural}px`;
});
```
